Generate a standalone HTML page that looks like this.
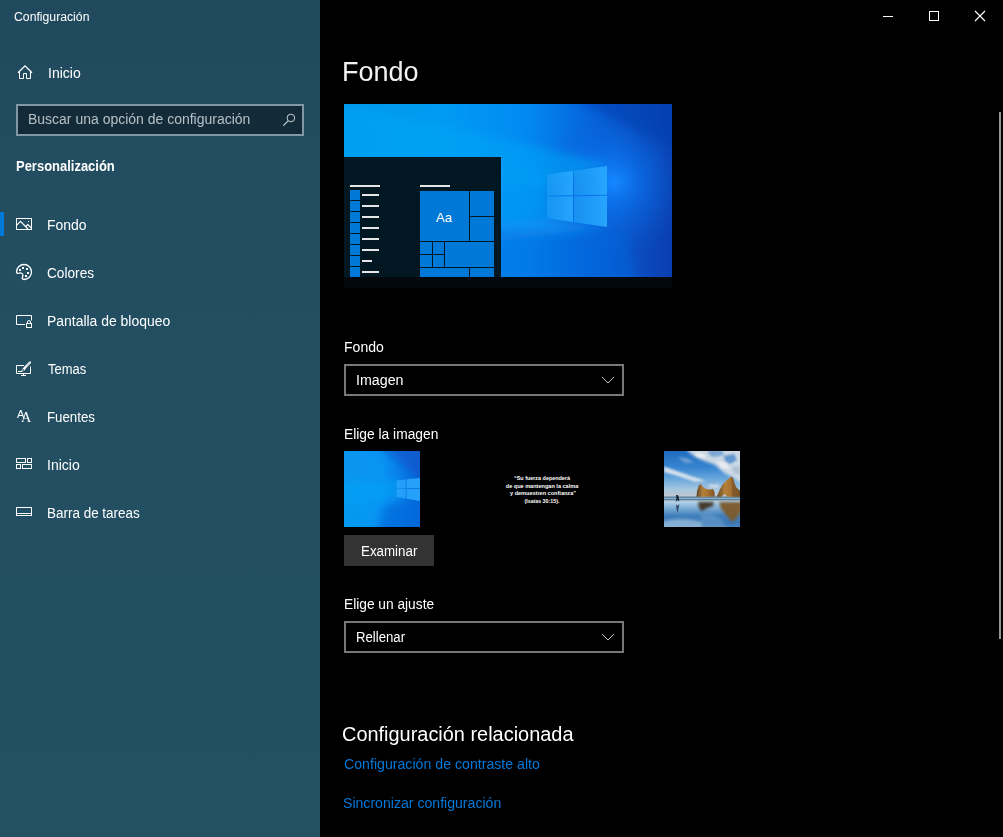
<!DOCTYPE html>
<html lang="es">
<head>
<meta charset="utf-8">
<title>Configuración</title>
<style>
html,body{margin:0;padding:0;background:#000;}
body{width:1003px;height:837px;position:relative;overflow:hidden;font-family:"Liberation Sans",sans-serif;color:#fff;}
.abs{position:absolute;white-space:nowrap;}
#side{position:absolute;left:0;top:0;width:320px;height:837px;background:linear-gradient(180deg,#21495d 0%,#234e62 30%,#245064 100%);}
.t{position:absolute;white-space:nowrap;line-height:1;transform-origin:0 0;transform:scaleX(0.9999);}
.nav{font-size:14px;color:#fff;}
.ico{position:absolute;}
.ico *{fill:none;stroke:#fff;stroke-width:1;}
#main{position:absolute;left:320px;top:0;width:683px;height:837px;background:#000;}
.sel{position:absolute;left:344px;width:276px;height:28px;border:2px solid #777;background:#000;}
.lnk{color:#0079d8;}
</style>
</head>
<body>
<div id="side"></div>
<div id="main"></div>

<!-- title bar -->
<div class="t" id="ttl" style="left:13.5px;top:11px;font-size:12px;transform:scaleX(1.0187);">Configuración</div>
<svg class="ico" style="left:880px;top:10px" width="110" height="14" viewBox="0 0 110 14">
  <path d="M3 6.5H13"/>
  <rect x="49.5" y="1.5" width="9" height="9"/>
  <path d="M95 1L105 11M105 1L95 11" style="stroke-width:1.150"/>
</svg>

<!-- sidebar -->
<svg class="ico" style="left:17px;top:64px" width="17" height="17" viewBox="0 0 17 17">
  <path d="M1 8.800L8 1.800L15 8.800" style="stroke-width:1.250"/><path d="M2.500 7.500V14.500H6.500V9.500H9.500V14.500H13.500V7.500"/>
</svg>
<div class="t nav" id="n0" style="left:48px;top:66px;">Inicio</div>

<div class="abs" style="left:16px;top:104px;width:284px;height:28px;border:2px solid #7f99a6;background:#132b38;"></div>
<div class="t" id="srch" style="left:27.5px;top:112px;font-size:14px;color:#b4c0c6;transform:scaleX(0.9989);">Buscar una opción de configuración</div>
<svg class="ico" style="left:282px;top:112px" width="15" height="15" viewBox="0 0 15 15">
  <circle cx="8.900" cy="5.950" r="3.800" style="stroke:#c4d0d4"/><path d="M6.100 8.900L1.300 13.700" style="stroke:#c4d0d4;stroke-width:1.200"/>
</svg>

<div class="t" id="pers" style="left:15.5px;top:159px;font-size:14px;font-weight:bold;transform:scaleX(0.9268);">Personalización</div>

<div class="abs" style="left:0;top:212px;width:4px;height:24px;background:#0078d7;"></div>

<svg class="ico" style="left:16px;top:216px" width="18" height="16" viewBox="0 0 18 16">
  <rect x="0.500" y="2.500" width="15" height="11"/><path d="M0.500 9.300L4.500 5.300L12 13M9.800 10.500L11.800 8.500L15.300 12" style="stroke-width:1.150"/><rect x="12" y="5" width="1" height="1" style="fill:#fff;stroke:none"/>
</svg>
<div class="t nav" id="n1" style="left:46.75px;top:218px;transform:scaleX(0.9980);">Fondo</div>

<svg class="ico" style="left:15px;top:263px" width="18" height="18" viewBox="0 0 18 18">
  <path style="stroke-width:1.300" d="M9 16.500A7.500 7.500 0 1 0 1.500 9C1.500 10.300 2.500 10.500 4 10.200C6 9.600 7.900 10.200 7.900 12.200C7.900 13.800 7 14.500 7.300 15.600C7.600 16.400 8.300 16.500 9 16.500Z"/>
  <g style="fill:#fff;stroke:none"><rect x="4" y="6" width="2" height="2" style="fill:#fff;stroke:none"/><rect x="7" y="4" width="2" height="2" style="fill:#fff;stroke:none"/><rect x="11" y="5" width="2" height="2" style="fill:#fff;stroke:none"/><rect x="12" y="9" width="2" height="2" style="fill:#fff;stroke:none"/><rect x="10" y="12" width="2" height="2" style="fill:#fff;stroke:none"/></g>
</svg>
<div class="t nav" id="n2" style="left:47px;top:266px;transform:scaleX(0.9757);">Colores</div>

<svg class="ico" style="left:16px;top:313px" width="18" height="16" viewBox="0 0 18 16">
  <path d="M9 11.500H0.500V2.500H15.500V7.500"/><rect x="10.500" y="10.500" width="5" height="4"/><path d="M11.500 10.500V9A1.500 1.500 0 0 1 14.500 9V10.500"/>
</svg>
<div class="t nav" id="n3" style="left:46.5px;top:314px;transform:scaleX(0.9950);">Pantalla de bloqueo</div>

<svg class="ico" style="left:16px;top:360px" width="18" height="18" viewBox="0 0 18 18">
  <path d="M8 5.500H0.500V13.500H14.500V6.500M7.500 13.500V15.500M5 15.500H10M2 11.500H6"/>
  <path d="M14 2.500L9.900 6.600" style="stroke-width:2.300;stroke-linecap:round"/>
  <path d="M13.800 2.700L10.500 6" style="stroke:#234d61;stroke-width:0.900;stroke-dasharray:0.900 0.800"/>
  <path d="M8.900 6.300L10.300 7.700L8.700 10.300C7.700 11.400 6.200 11.800 5 11.500C5.500 10.200 6 9.200 7 8.200Z" style="fill:#fff;stroke:none"/>
  <circle cx="7.100" cy="9.900" r="0.850" style="fill:#234d61;stroke:none"/>
</svg>
<div class="t nav" id="n4" style="left:48.25px;top:362px;transform:scaleX(0.9245);">Temas</div>

<div class="t" style="left:16.500px;top:408.800px;font-size:11px;">A</div>
<div class="t" style="left:20.800px;top:410.100px;font-size:14.200px;font-family:'Liberation Serif',serif;">A</div>
<div class="t nav" id="n5" style="left:46.5px;top:410px;transform:scaleX(0.9471);">Fuentes</div>

<svg class="ico" style="left:16px;top:457px" width="18" height="16" viewBox="0 0 18 16">
  <rect x="0.500" y="1.500" width="9" height="4"/><rect x="11.500" y="1.500" width="4" height="4"/><rect x="0.500" y="7.500" width="4" height="4"/><rect x="6.500" y="7.500" width="9" height="4"/>
</svg>
<div class="t nav" id="n6" style="left:47px;top:458px;">Inicio</div>

<svg class="ico" style="left:16px;top:505px" width="18" height="16" viewBox="0 0 18 16">
  <rect x="0.500" y="2.500" width="15" height="8"/><path d="M0.500 8.500H15.500"/>
</svg>
<div class="t nav" id="n7" style="left:46.5px;top:506px;transform:scaleX(0.9615);">Barra de tareas</div>

<!-- main -->
<div class="t" id="h1" style="left:341.500px;top:58.700px;font-size:27px;color:#f2f2f2;transform:scaleX(1.0003);">Fondo</div>

<!-- preview -->
<svg class="abs" id="prev" style="left:344px;top:104px" width="328" height="184" viewBox="0 0 328 184">
<defs>
<linearGradient id="wg" x1="0" y1="0" x2="1" y2="0">
<stop offset="0" stop-color="#0097ec"/><stop offset="0.3" stop-color="#009bf2"/><stop offset="0.55" stop-color="#028af2"/><stop offset="0.75" stop-color="#0664dc"/><stop offset="0.9" stop-color="#0a4cc0"/><stop offset="1" stop-color="#0a3eb0"/>
</linearGradient>
<radialGradient id="glow" cx="270" cy="78" r="75" gradientUnits="userSpaceOnUse">
<stop offset="0" stop-color="#1488ff" stop-opacity="1"/><stop offset="0.35" stop-color="#0c78f4" stop-opacity="0.6"/><stop offset="1" stop-color="#0a60d0" stop-opacity="0"/>
</radialGradient>
<linearGradient id="pg" x1="0" y1="0" x2="1" y2="0">
<stop offset="0" stop-color="#1c9cf6" stop-opacity="0.75"/><stop offset="1" stop-color="#28a8ff" stop-opacity="0.95"/>
</linearGradient>
<filter id="bl" x="-20%" y="-20%" width="140%" height="140%"><feGaussianBlur stdDeviation="5"/></filter>
<clipPath id="wc"><rect x="0" y="0" width="328" height="173"/></clipPath>
</defs>
<rect x="0" y="0" width="328" height="173" fill="url(#wg)"/>
<g clip-path="url(#wc)">
<rect x="0" y="0" width="328" height="173" fill="url(#glow)"/>
<g filter="url(#bl)">
<polygon points="265,60 -20,-5 -20,70 205,80" fill="#06a6f6" opacity="0.55"/>
<polygon points="263,123 203,114 -20,135 -20,150 60,150" fill="#18a0f8" opacity="0.45"/>
<polygon points="205,72 -20,50 -20,130 205,112" fill="#04a0f4" opacity="0.55"/>
<polygon points="150,125 280,130 300,200 100,200" fill="#0868dc" opacity="0.45"/>
<polygon points="220,-10 338,-10 338,50" fill="#0840b0" opacity="0.55"/>
</g>
<polygon points="203,70.500 229,66.800 229,91.200 203,91.500" fill="url(#pg)"/>
<polygon points="230,66.600 263,62 263,90.700 230,91.200" fill="url(#pg)"/>
<polygon points="203,92.500 229,92.200 229,118 203,114.300" fill="url(#pg)"/>
<polygon points="230,92.200 263,91.700 263,123 230,118.200" fill="url(#pg)"/>
</g>
<rect x="0" y="53" width="157" height="120" fill="#011823"/>
<rect x="6" y="81" width="30" height="2" fill="#e6e6e6"/><rect x="6" y="86" width="10" height="10" fill="#0078d7"/><rect x="18" y="90" width="17" height="2" fill="#e6e6e6"/><rect x="6" y="97" width="10" height="10" fill="#0078d7"/><rect x="18" y="101" width="17" height="2" fill="#e6e6e6"/><rect x="6" y="108" width="10" height="10" fill="#0078d7"/><rect x="18" y="112" width="17" height="2" fill="#e6e6e6"/><rect x="6" y="119" width="10" height="10" fill="#0078d7"/><rect x="18" y="123" width="17" height="2" fill="#e6e6e6"/><rect x="6" y="130" width="10" height="10" fill="#0078d7"/><rect x="18" y="134" width="17" height="2" fill="#e6e6e6"/><rect x="6" y="141" width="10" height="10" fill="#0078d7"/><rect x="18" y="145" width="17" height="2" fill="#e6e6e6"/><rect x="6" y="152" width="10" height="10" fill="#0078d7"/><rect x="18" y="156" width="10" height="2" fill="#e6e6e6"/><rect x="6" y="163" width="10" height="10" fill="#0078d7"/><rect x="18" y="167" width="17" height="2" fill="#e6e6e6"/><rect x="76" y="81" width="30" height="2" fill="#e6e6e6"/><rect x="76" y="87" width="49" height="50" fill="#0078d7"/><rect x="126" y="87" width="24" height="25" fill="#0078d7"/><rect x="126" y="113" width="24" height="24" fill="#0078d7"/><rect x="76" y="138" width="12" height="12" fill="#0078d7"/><rect x="89" y="138" width="11" height="12" fill="#0078d7"/><rect x="76" y="151" width="12" height="12" fill="#0078d7"/><rect x="89" y="151" width="11" height="12" fill="#0078d7"/><rect x="101" y="138" width="49" height="25" fill="#0078d7"/><rect x="76" y="164" width="49" height="9" fill="#0078d7"/><rect x="126" y="164" width="24" height="9" fill="#0078d7"/>
<text x="100" y="118" font-family="Liberation Sans, sans-serif" font-size="13" fill="#fff" text-anchor="middle">Aa</text>
<rect x="0" y="173" width="328" height="11" fill="#03080c"/>
</svg>

<div class="t" id="l1" style="left:343.5px;top:340px;font-size:14px;transform:scaleX(1.0035);">Fondo</div>
<div class="sel" style="top:364px;"></div>
<div class="t" id="s1" style="left:356px;top:373px;font-size:14px;transform:scaleX(1.0174);">Imagen</div>
<svg class="ico" style="left:600px;top:374px" width="15" height="10" viewBox="0 0 15 10"><path d="M2 3L8 9L14 3" style="stroke:#c4c4c4;stroke-width:1"/></svg>

<div class="t" id="l2" style="left:343.5px;top:427px;font-size:14px;transform:scaleX(0.9858);">Elige la imagen</div>
<svg class="abs" id="th1" style="left:344px;top:451px" width="76" height="76" viewBox="0 0 76 76">
<defs>
<linearGradient id="t1g" x1="0" y1="0" x2="1" y2="0"><stop offset="0" stop-color="#0a96ee"/><stop offset="0.5" stop-color="#0894f2"/><stop offset="0.8" stop-color="#0878e6"/><stop offset="1" stop-color="#0a66d8"/></linearGradient>
<filter id="t1b" x="-30%" y="-30%" width="160%" height="160%"><feGaussianBlur stdDeviation="4"/></filter>
<clipPath id="t1c"><rect width="76" height="76"/></clipPath>
</defs>
<rect width="76" height="76" fill="url(#t1g)"/>
<g clip-path="url(#t1c)">
<g filter="url(#t1b)">
<polygon points="30,-10 90,-10 90,30 70,24" fill="#0a54c8" opacity="0.7"/>
<polygon points="-10,30 55,30 55,46 -10,60" fill="#0aa2f6" opacity="0.6"/>
<polygon points="40,55 90,48 90,90 30,90" fill="#0868dc" opacity="0.7"/>
<polygon points="-10,60 30,55 20,90 -10,90" fill="#0a9cf2" opacity="0.5"/>
</g>
<polygon points="52.500,29.500 61.800,28.400 61.800,37.300 52.500,37.400" fill="#2aa6fc" opacity="0.8"/>
<polygon points="62.600,28.300 76,27 76,37.100 62.600,37.300" fill="#2aa6fc" opacity="0.9"/>
<polygon points="52.500,38.100 61.800,38 61.800,47.600 52.500,46" fill="#2aa6fc" opacity="0.8"/>
<polygon points="62.600,38 76,37.800 76,50 62.600,47.700" fill="#2aa6fc" opacity="0.9"/>
</g>
</svg>
<svg class="abs" id="th2" style="left:424px;top:451px" width="236" height="76" viewBox="0 0 236 76" font-family="Liberation Sans, sans-serif" font-weight="bold" font-size="6.200" fill="#fff" text-anchor="middle">
<rect width="236" height="76" fill="#000"/>
<text x="118" y="28.700" textLength="56" lengthAdjust="spacingAndGlyphs">“Su fuerza dependerá</text>
<text x="118" y="36.500" textLength="72.500" lengthAdjust="spacingAndGlyphs">de que mantengan la calma</text>
<text x="119" y="44.200" textLength="66" lengthAdjust="spacingAndGlyphs">y demuestren confianza”</text>
<text x="118" y="52" textLength="35" lengthAdjust="spacingAndGlyphs">(Isaías 30:15).</text>
</svg>
<svg class="abs" id="th3" style="left:664px;top:451px" width="76" height="76" viewBox="0 0 76 76">
<defs>
<linearGradient id="sky" x1="0" y1="0" x2="0" y2="1"><stop offset="0" stop-color="#1f6cbe"/><stop offset="0.35" stop-color="#3583d0"/><stop offset="0.6" stop-color="#68a6dc"/><stop offset="0.85" stop-color="#a9c8e0"/><stop offset="1" stop-color="#c6c4cc"/></linearGradient>
<linearGradient id="wet" x1="0" y1="0" x2="0" y2="1"><stop offset="0" stop-color="#b4d0e6"/><stop offset="0.2" stop-color="#86b4da"/><stop offset="0.55" stop-color="#3f7ebc"/><stop offset="0.85" stop-color="#3a78b6"/><stop offset="1" stop-color="#4a86be"/></linearGradient>
<linearGradient id="rk" x1="0" y1="0" x2="1" y2="0"><stop offset="0" stop-color="#5e4628"/><stop offset="0.35" stop-color="#b48038"/><stop offset="0.7" stop-color="#a06c30"/><stop offset="1" stop-color="#7a5428"/></linearGradient>
<filter id="b1" x="-30%" y="-30%" width="160%" height="160%"><feGaussianBlur stdDeviation="1.500"/></filter>
<filter id="b2" x="-30%" y="-30%" width="160%" height="160%"><feGaussianBlur stdDeviation="0.600"/></filter>
<filter id="b3" x="-30%" y="-30%" width="160%" height="160%"><feGaussianBlur stdDeviation="0.900"/></filter>
<clipPath id="t3c"><rect width="76" height="76"/></clipPath>
</defs>
<g clip-path="url(#t3c)">
<rect width="76" height="46" fill="url(#sky)"/>
<g filter="url(#b1)">
<path d="M22 -2C28 5 36 9 46 12C54 14 57 21 64 24C70 26 74 31 80 34L80 -4Z" fill="#d4dce6" opacity="0.95"/>
<path d="M14 6L24 8L30 12L20 11Z" fill="#b8cce0" opacity="0.600"/>
</g>
<g filter="url(#b3)">
<path d="M44 -1L58 -1L60 4L50 6L45 4Z" fill="#6f9fd0" opacity="0.85"/>
<path d="M60 5L70 3L73 9L66 13L61 10Z" fill="#4d8aca" opacity="0.85"/>
<path d="M30 2L40 3L42 7L34 6Z" fill="#f2f4f6" opacity="0.9"/>
<path d="M52 10L62 12L66 18L58 17Z" fill="#f0f2f4" opacity="0.8"/>
<path d="M68 16L76 15L76 24L70 22Z" fill="#a8bcd0" opacity="0.8"/>
<path d="M0 15.500C8 18.500 18 21.500 28 25.500C34 27.500 39 28.500 42 30.500L30 30.500C20 26.500 8 23.500 0 21Z" fill="#dde5ee" opacity="0.95"/>
<path d="M44 33.500L55 33.500L55 36.500L46 36.500Z" fill="#e4e6ea" opacity="0.75"/>
</g>
<rect y="45.500" width="76" height="6" fill="#54809f"/>
<rect y="46.800" width="76" height="1.200" fill="#9cbad0" opacity="0.8"/>
<rect y="49.300" width="76" height="1.700" fill="#c8dcea" opacity="0.85"/>
<rect y="51" width="76" height="25" fill="url(#wet)"/>
<g filter="url(#b1)">
<path d="M34 51L50 51L49 55L42 57.500L38 60.500L35 57Z" fill="#3c3020" opacity="0.95"/>
<path d="M55 51L78 51L78 60L72 68L68 71L62 64L57 58Z" fill="#7c5a2c" opacity="0.95"/>
<path d="M-4 71C10 67 24 67 38 71L38 80L-4 80Z" fill="#9cc0de" opacity="0.75"/>
<path d="M36 63C46 61 54 65 60 71L62 80L40 80Z" fill="#7aa6d0" opacity="0.45"/>
</g>
<g filter="url(#b2)">
<path d="M32.500 45.700L33 40L35 34L37 33L39 36L42 38L46 38.500L49 38L50.500 41L50.700 45.700Z" fill="url(#rk)"/>
<path d="M52.500 45.700L54 43L56 38L59 33L63 29L67.500 25.500L69 27L70 31L72 36L75 39L77 40L77 45.700L63 45.700L61.500 43.500L59.500 43.500L58 45.700Z" fill="url(#rk)"/>
<path d="M67.500 25.500L69 27L70 31L72 36L75 39L77 40L77 45.700L68 45.700Z" fill="#6a4a24" opacity="0.500"/>
<path d="M12 44.200L14 44L14.600 46L15 49L15.500 50.700L13.500 49L11.500 51L12.500 48Z" fill="#14202c"/>
<path d="M12 53L13.500 55L15.500 53L14.500 57L13.600 62L12.600 58Z" fill="#1c3048" opacity="0.85"/>
</g>
</g>
</svg>

<div class="abs" style="left:344px;top:535px;width:90px;height:31px;background:#333;"></div>
<div class="t" id="btn" style="left:361px;top:544px;font-size:14px;transform:scaleX(0.9531);">Examinar</div>

<div class="t" id="l3" style="left:344px;top:597px;font-size:14px;transform:scaleX(0.9808);">Elige un ajuste</div>
<div class="sel" style="top:621px;"></div>
<div class="t" id="s2" style="left:356px;top:630px;font-size:14px;transform:scaleX(0.9411);">Rellenar</div>
<svg class="ico" style="left:600px;top:631px" width="15" height="10" viewBox="0 0 15 10"><path d="M2 3L8 9L14 3" style="stroke:#c4c4c4;stroke-width:1"/></svg>

<div class="t" id="h2" style="left:342px;top:724.2px;font-size:20px;transform:scaleX(0.9962);">Configuración relacionada</div>
<div class="t lnk" id="k1" style="left:343.75px;top:757px;font-size:14px;transform:scaleX(1.0109);">Configuración de contraste alto</div>
<div class="t lnk" id="k2" style="left:343px;top:796px;font-size:14px;transform:scaleX(1.0066);">Sincronizar configuración</div>

<div class="abs" style="left:999px;top:112px;width:2px;height:527px;background:#969696;"></div>
</body>
</html>
